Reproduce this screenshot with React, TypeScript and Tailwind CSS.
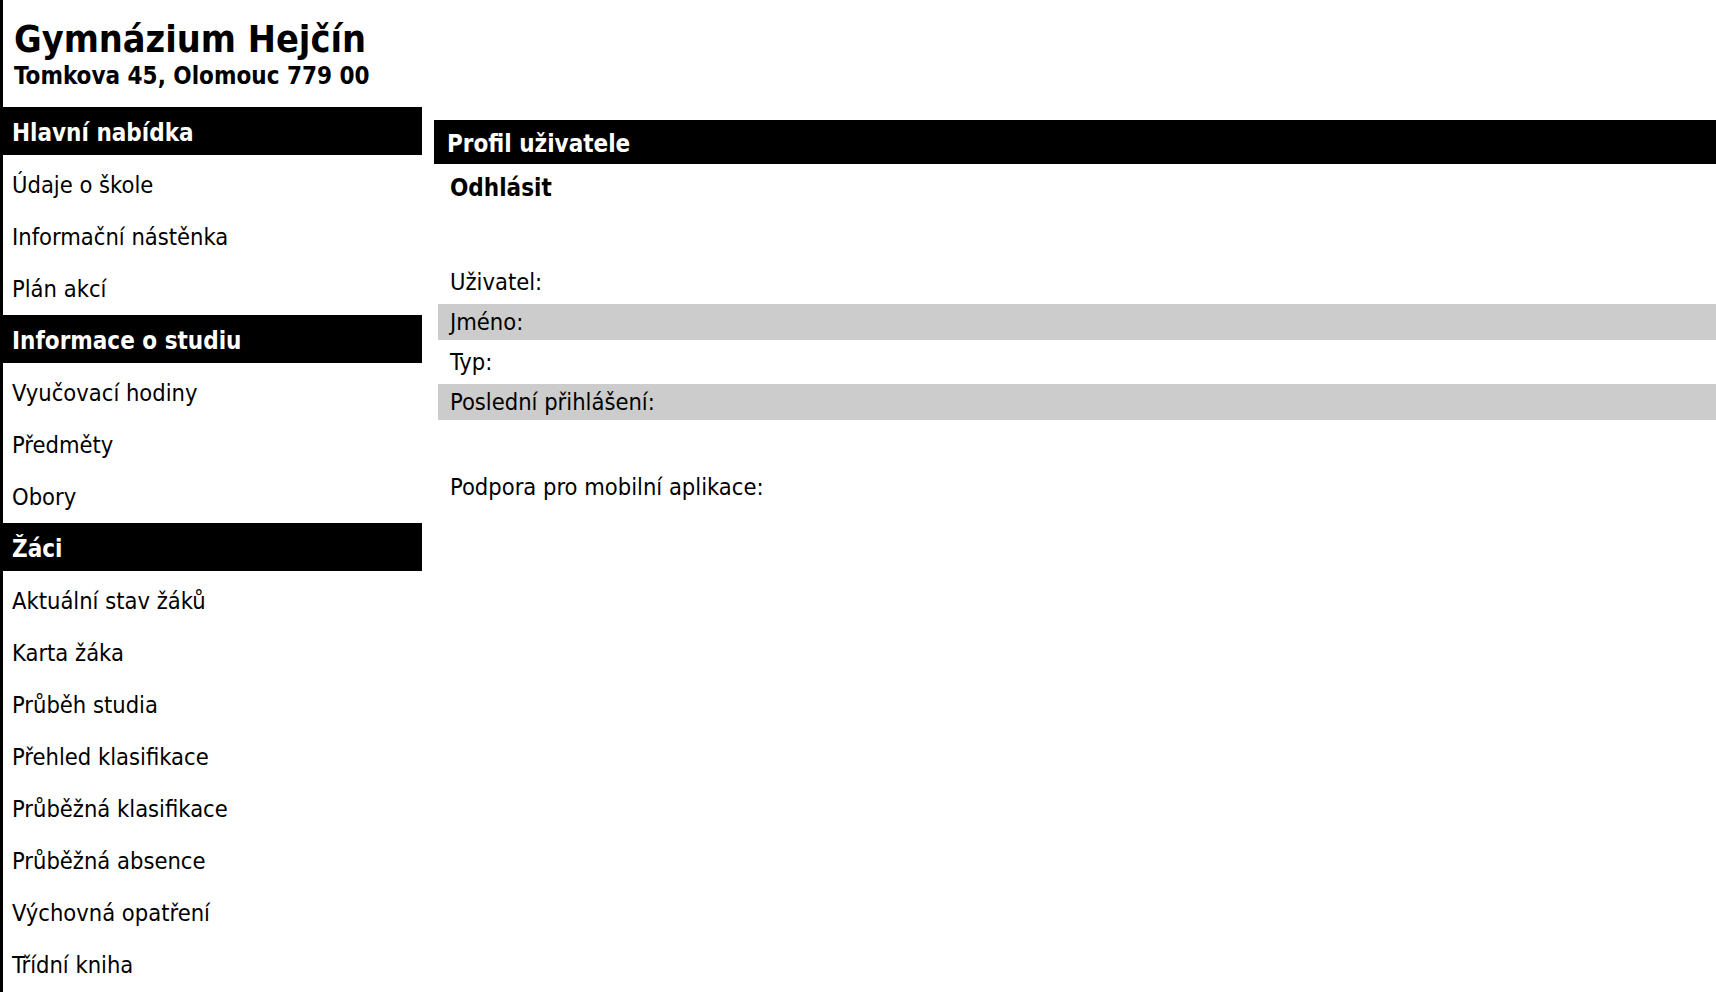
import React from "react";

const sections = [
  { title: "Hlavní nabídka", items: ["Údaje o škole", "Informační nástěnka", "Plán akcí"] },
  { title: "Informace o studiu", items: ["Vyučovací hodiny", "Předměty", "Obory"] },
  {
    title: "Žáci",
    items: [
      "Aktuální stav žáků",
      "Karta žáka",
      "Průběh studia",
      "Přehled klasifikace",
      "Průběžná klasifikace",
      "Průběžná absence",
      "Výchovná opatření",
      "Třídní kniha",
    ],
  },
];

const profileRows = [
  { label: "Uživatel:", shaded: false },
  { label: "Jméno:", shaded: true },
  { label: "Typ:", shaded: false },
  { label: "Poslední přihlášení:", shaded: true },
];

function Sidebar() {
  return (
    <nav className="w-[419px] shrink-0">
      {sections.map((section) => (
        <div key={section.title}>
          <div className="h-[48px] mb-[4px] -ml-[3px] pl-[12px] pt-[3px] bg-black text-white font-bold text-[24px] flex items-center">
            {section.title}
          </div>
          {section.items.map((item) => (
            <div key={item} className="h-[52px] pl-[9px] pt-[2px] text-[23.5px] flex items-center">
              {item}
            </div>
          ))}
        </div>
      ))}
    </nav>
  );
}

function Profile() {
  return (
    <main className="flex-1 ml-[12px] mt-[13px]">
      <div className="h-[44px] pl-[13px] pt-[3px] bg-black text-white font-bold text-[24px] flex items-center">
        Profil uživatele
      </div>
      <div className="h-[46px] pl-[16px] pt-[2px] font-bold text-[24px] flex items-center">Odhlásit</div>
      <div className="mt-[50px] pl-[4px] py-[4px] flex flex-col gap-[4px]">
        {profileRows.map((row) => (
          <div
            key={row.label}
            className={`h-[36px] pl-[12px] pt-[2px] text-[23.5px] flex items-center ${row.shaded ? "bg-[#cccccc]" : ""}`}
          >
            {row.label}
          </div>
        ))}
      </div>
      <div className="mt-[45px] h-[36px] pl-[16px] pt-[2px] text-[23.5px] flex items-center">
        Podpora pro mobilní aplikace:
      </div>
    </main>
  );
}

export default function App() {
  return (
    <div
      className="min-h-screen bg-white text-black border-l-[3px] border-black overflow-hidden"
      style={{ fontFamily: '"DejaVu Sans Condensed", "DejaVu Sans", sans-serif' }}
    >
      <header className="h-[107px] pl-[11px] pt-[17px]">
        <h1 className="font-bold text-[37.5px] leading-[44px]">Gymnázium Hejčín</h1>
        <p className="font-bold text-[24px] leading-[30px]">Tomkova 45, Olomouc 779 00</p>
      </header>
      <div className="flex">
        <Sidebar />
        <Profile />
      </div>
    </div>
  );
}
